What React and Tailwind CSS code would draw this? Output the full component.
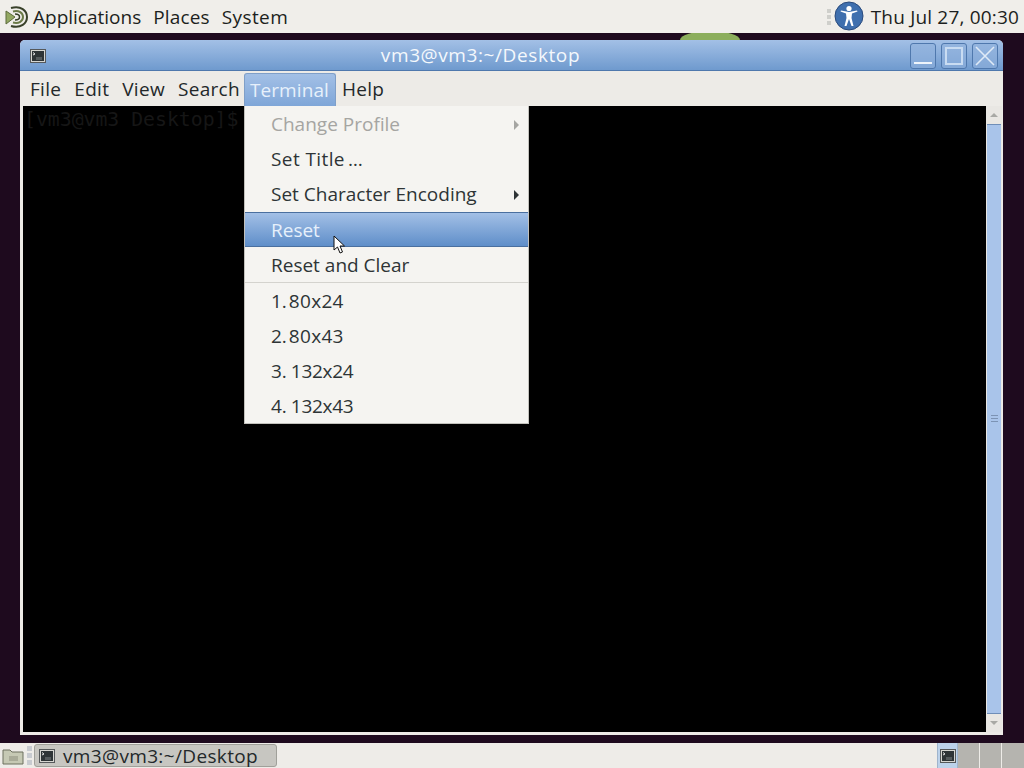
import React from 'react';

const TerminalIcon = ({ size = 16 }) => (
  <svg width={size} height={size} viewBox="0 0 16 16" className="shrink-0">
    <rect x="0.5" y="1.5" width="15" height="13" fill="#d5d5d0" stroke="#55585a" />
    <rect x="2" y="3" width="12" height="10" fill="#2e3436" />
    <path d="M3 4.5 L5 6 L3 7" stroke="#e8e8e8" strokeWidth="1" fill="none" />
    <rect x="6" y="9" width="6" height="3" fill="#555b5d" />
  </svg>
);

const MenuItem = ({ children, disabled, active, arrow, className = '' }) => (
  <div
    className={`flex items-center justify-between pl-[26px] pr-[9px] ${className} ${
      active
        ? 'bg-gradient-to-b from-[#a3c0e6] to-[#5f8ec9] border-y border-[#4a6f9f] text-[#e6f0fb]'
        : disabled
        ? 'text-[#a5a5a2]'
        : 'text-[#2e3436]'
    }`}
  >
    <span>{children}</span>
    {arrow && (
      <span
        className={`w-0 h-0 border-y-[5px] border-y-transparent border-l-[5px] ${
          disabled ? 'border-l-[#a5a5a2]' : 'border-l-[#2e3436]'
        }`}
      />
    )}
  </div>
);

const App = () => {
  return (
    <div className="relative w-[1024px] h-[768px] overflow-hidden flex flex-col bg-[#1e0a1e] font-['Open_Sans','Noto_Sans',sans-serif] text-[#2e3436]">
      {/* top panel */}
      <div className="relative z-10 h-[33px] shrink-0 bg-[#f0eeea] flex items-center justify-between text-[19px] leading-none text-[#1c1f20] pl-[4px] pr-[5px] pt-[1px]">
        <div className="flex items-center">
          <svg width="24" height="24" viewBox="0 0 24 24" className="mr-[5px] -mt-[1px]">
            <path d="M2 6 L11 12 L2 19 Z" fill="#93a862" stroke="#5d6b3c" strokeWidth="1" />
            <path d="M7 3 C17 0 23 6 23 12 C23 18 17 24 7 21" fill="none" stroke="#39412a" strokeWidth="2" />
            <path d="M9 6.5 C15 5 19 8 19 12 C19 16 15 19 9 17.5" fill="none" stroke="#6b7a48" strokeWidth="2" />
            <path d="M11 9 C14 9 15.5 10.5 15.5 12 C15.5 13.5 14 15 11 15" fill="none" stroke="#39412a" strokeWidth="1.5" />
          </svg>
          <span className="mr-[12px]">Applications</span>
          <span className="mr-[12px] tracking-[0.15px]">Places</span>
          <span className="tracking-[0.4px]">System</span>
        </div>
        <div className="flex items-center">
          <div className="flex flex-col gap-[2px] mr-[3px] -mt-[1px]">
            <span className="w-[4px] h-[4px] bg-[#cfcfcb]" />
            <span className="w-[4px] h-[4px] bg-[#cfcfcb]" />
            <span className="w-[4px] h-[4px] bg-[#cfcfcb]" />
          </div>
          <svg width="30" height="30" viewBox="0 0 30 30" className="mr-[7px] -mt-[2px]">
            <circle cx="15" cy="15" r="14" fill="#3f6fae" stroke="#2a4a7c" />
            <circle cx="15" cy="7.5" r="2.6" fill="#fff" />
            <path d="M6.5 10.5 L12 12.5 L12.5 17 L10.5 25 L12.5 25 L15 18 L17.5 25 L19.5 25 L17.5 17 L18 12.5 L23.5 10.5 L23 9.5 L15 11 L7 9.5 Z" fill="#fff" />
          </svg>
          <span className="tracking-[0.18px]">Thu Jul 27, 00:30</span>
        </div>
      </div>

      {/* wallpaper bit behind the window */}
      <div className="absolute left-[680px] top-[31px] w-[60px] h-[9px] [border-radius:30px_30px_0_0/9px_9px_0_0] bg-[#8cae5c]" />

      {/* window */}
      <div className="relative flex-1 min-h-0 pt-[7px] pl-[20px] pr-[21px] pb-[8px]">
        <div className="h-full flex flex-col rounded-t-[5px] overflow-hidden bg-[#edebe7]">
          <div className="relative h-[31px] shrink-0 flex items-center justify-center pt-[1px] bg-gradient-to-b from-[#a3c0e6] to-[#6f9ace] border-b border-[#4f78ad] text-[19px] leading-none text-[#f4f8fc]">
            <div className="absolute left-[10px] top-[8px]">
              <TerminalIcon />
            </div>
            <span className="tracking-[0.6px] pr-[62px]">vm3@vm3:~/Desktop</span>
            <div className="absolute right-[5px] top-[3px] flex gap-[5px]">
              <div className="w-[26px] h-[26px] rounded-[3px] border border-[#4f78ad] bg-[#8fb0dc]/60 flex items-end justify-center pb-[4px]">
                <span className="w-[18px] h-[2px] bg-[#eef4fb]" />
              </div>
              <div className="w-[26px] h-[26px] rounded-[3px] border border-[#4f78ad] bg-[#8fb0dc]/60 flex items-center justify-center">
                <span className="w-[18px] h-[18px] border-2 border-[#c9dcf2]" />
              </div>
              <div className="w-[26px] h-[26px] rounded-[3px] border border-[#4f78ad] bg-[#8fb0dc]/60 flex items-center justify-center">
                <svg width="20" height="20" viewBox="0 0 20 20">
                  <path d="M1 1 L19 19 M19 1 L1 19" stroke="#dfeaf7" strokeWidth="1.6" />
                </svg>
              </div>
            </div>
          </div>

          {/* menu bar */}
          <div className="h-[35px] shrink-0 flex items-end pl-[3px] text-[19px] leading-none bg-[#edebe7] tracking-[0.3px]">
            <span className="h-[35px] flex items-center pt-[2px] pl-[7px] pr-[6px] text-[#23282a]">File</span>
            <span className="h-[35px] flex items-center pt-[2px] pl-[7px] pr-[6px] text-[#23282a]">Edit</span>
            <span className="h-[35px] flex items-center pt-[2px] pl-[7px] pr-[6px] text-[#23282a]">View</span>
            <span className="h-[35px] flex items-center pt-[2px] pl-[7px] pr-[4px] text-[#23282a]">Search</span>
            <span className="w-[92px] h-[33px] flex items-center pl-[5px] rounded-t-[3px] border border-b-0 border-[#7f9fc8] bg-gradient-to-b from-[#a3c0e6] to-[#7fa6d8] text-[#e6f0fb] tracking-[0.1px]">Terminal</span>
            <span className="h-[35px] flex items-center pt-[2px] px-[6px] text-[#23282a]">Help</span>
          </div>

          {/* terminal + scrollbar */}
          <div className="flex-1 min-h-0 flex pl-[3px] pr-[1px] pb-[3px]">
            <div className="flex-1 bg-black pl-[1px] pt-[3px] font-['DejaVu_Sans_Mono',monospace] text-[19.8px] leading-[22px] text-[#161616]">
              [vm3@vm3 Desktop]$
            </div>
            <div className="w-[16px] shrink-0 flex flex-col bg-[#e9e7e3]">
              <div className="h-[18px] shrink-0 flex items-center justify-center">
                <span className="w-0 h-0 border-x-[4px] border-x-transparent border-b-[4px] border-b-[#a9a9a5]" />
              </div>
              <div className="flex-1 mx-[1px] flex items-center justify-center pb-[2px] bg-[#a9c4ea] border-y border-[#6f8eb8]">
                <div className="flex flex-col gap-[2px]">
                  <span className="w-[7px] h-[1px] bg-[#7c93b4]" />
                  <span className="w-[7px] h-[1px] bg-[#7c93b4]" />
                  <span className="w-[7px] h-[1px] bg-[#7c93b4]" />
                </div>
              </div>
              <div className="h-[18px] shrink-0 flex items-center justify-center">
                <span className="w-0 h-0 border-x-[4px] border-x-transparent border-t-[4px] border-t-[#a9a9a5]" />
              </div>
            </div>
          </div>
        </div>
      </div>

      {/* bottom panel */}
      <div className="h-[25px] shrink-0 bg-[#eeece8] flex items-center text-[19px] leading-none">
        <svg width="22" height="20" viewBox="0 0 22 20" className="ml-[2px] shrink-0">
          <path d="M1 4 L8 4 L10 6 L21 6 L21 18 L1 18 Z" fill="#c6c9b4" stroke="#6d705f" />
          <rect x="7" y="10" width="9" height="5" fill="#a9ab98" />
        </svg>
        <div className="flex flex-col gap-[2px] ml-[3px] mr-[2px]">
          <span className="w-[5px] h-[5px] bg-[#c8cbd0]" />
          <span className="w-[5px] h-[5px] bg-[#c8cbd0]" />
          <span className="w-[5px] h-[5px] bg-[#c8cbd0]" />
        </div>
        <div className="w-[243px] h-[23px] flex items-center pl-[4px] rounded-[3px] border border-[#a0a09a] bg-[#c7c6c1] text-[#23282a]">
          <TerminalIcon />
          <span className="ml-[8px] mt-[1px] tracking-[0.35px]">vm3@vm3:~/Desktop</span>
        </div>
        <div className="ml-auto flex items-stretch h-full">
          <div className="w-[21px] flex items-center justify-center bg-[#bcd2ea] border-x border-[#9fb4cc]">
            <TerminalIcon />
          </div>
          <div className="w-[22px] bg-[#b5b4af] border-r border-[#eeece8]" />
          <div className="w-[22px] bg-[#b5b4af] border-r border-[#eeece8]" />
          <div className="w-[22px] bg-[#b5b4af]" />
        </div>
      </div>

      {/* open Terminal menu */}
      <div className="absolute left-[244px] top-[106px] w-[285px] h-[318px] bg-[#f5f4f1] border border-[#c2c1bc] border-t-0 text-[19px] leading-none pt-[1px]">
        <MenuItem disabled arrow className="h-[35px]">Change Profile</MenuItem>
        <MenuItem className="h-[35px]"><span className="tracking-[0.4px]">Set Title</span><span className="ml-[3px]">…</span></MenuItem>
        <MenuItem arrow className="h-[35px]">Set Character Encoding</MenuItem>
        <MenuItem active className="h-[35px] pt-[1px]">Reset</MenuItem>
        <MenuItem className="h-[35px] pt-[1px]">Reset and Clear</MenuItem>
        <div className="h-px bg-[#d4d3ce]" />
        <MenuItem className="h-[36px]">1.<span className="ml-[2px] tracking-[0.3px]">80x24</span></MenuItem>
        <MenuItem className="h-[35px]">2.<span className="ml-[2px] tracking-[0.3px]">80x43</span></MenuItem>
        <MenuItem className="h-[35px]">3.<span className="ml-[4px] tracking-[-0.3px]">132x24</span></MenuItem>
        <MenuItem className="h-[35px]">4.<span className="ml-[4px] tracking-[-0.3px]">132x43</span></MenuItem>
      </div>

      {/* mouse cursor */}
      <svg width="13" height="20" viewBox="0 0 13 20" className="absolute left-[333px] top-[235px]">
        <path d="M1 1 L1 15 L4.5 12 L7 18 L9.5 17 L7 11 L11.5 11 Z" fill="#fff" stroke="#111" strokeWidth="1" />
      </svg>
    </div>
  );
};

export default App;
